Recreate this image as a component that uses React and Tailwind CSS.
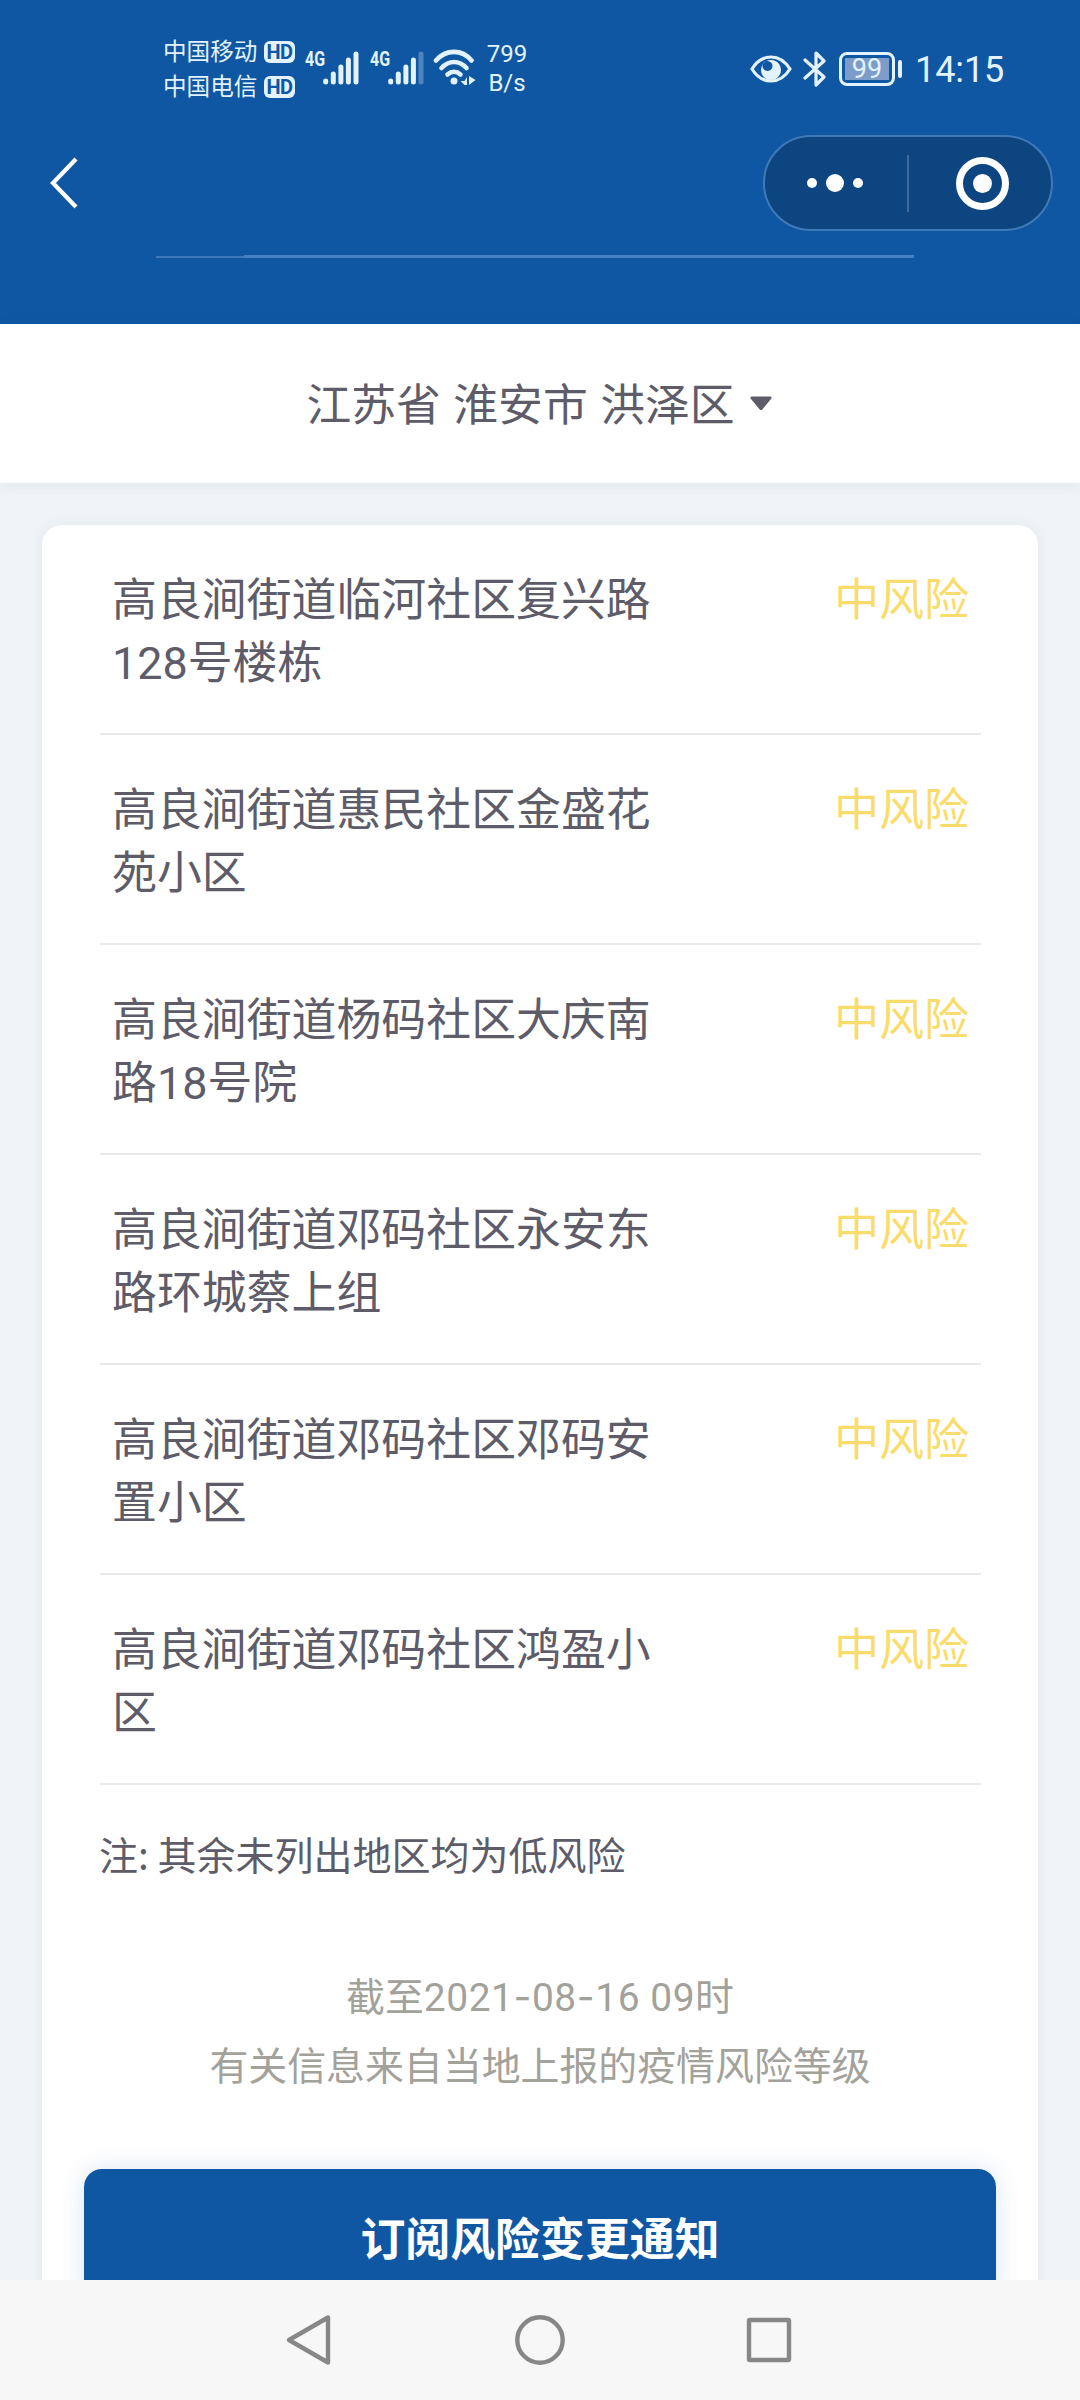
const items = [
  ["高良涧街道临河社区复兴路", "", "128", "号楼栋"],
  ["高良涧街道惠民社区金盛花", "苑小区", "", ""],
  ["高良涧街道杨码社区大庆南", "路", "18", "号院"],
  ["高良涧街道邓码社区永安东", "路环城蔡上组", "", ""],
  ["高良涧街道邓码社区邓码安", "置小区", "", ""],
  ["高良涧街道邓码社区鸿盈小", "区", "", ""],
];

function HdBadge() {
  return (
    <span className="flex h-[22px] w-[31px] items-center justify-center rounded-[6px] bg-[#e2f3ff] font-['Roboto',sans-serif] text-[20px] leading-none font-bold tracking-tight text-[#0f57a3]">
      HD
    </span>
  );
}

function Carrier({ name }) {
  return (
    <div className="flex h-[35px] items-center">
      <span className="w-[101px] pb-[2px] text-[23.600px] leading-[33px] whitespace-nowrap">{name}</span>
      <HdBadge />
    </div>
  );
}

function Signal({ weak }) {
  return (
    <div className="flex h-[36px] w-[55px] items-start">
      <span className="w-[18px] origin-left scale-x-[.8] font-['Roboto',sans-serif] text-[20px] leading-[18px] font-bold">4G</span>
      <svg className="h-[36px] w-[37px]" viewBox="0 0 37 36" fill="none" stroke="#e2f3ff" strokeWidth="5" strokeLinecap="round">
        <path d="M2.7 31v1M10.3 24v8M17.9 17v15M25.4 10v22" />
        <path d="M33 4v28" opacity={weak ? 0.3 : 1} />
      </svg>
    </div>
  );
}

function StatusBar() {
  return (
    <div className="flex h-[134px] items-start pt-[34px] pl-[163px] text-[#e2f3ff]">
      <div className="flex w-[142px] flex-col">
        <Carrier name="中国移动" />
        <Carrier name="中国电信" />
      </div>
      <div className="flex gap-[10px] pt-[16px]">
        <Signal />
        <Signal weak />
      </div>
      <svg className="mt-[14px] ml-[8px] h-[40px] w-[44px]" viewBox="0 0 44 40" fill="none" stroke="#e2f3ff" strokeWidth="4.6" strokeLinecap="round">
        <path d="M3 12.500C13 1 29 1 38.500 12.500" />
        <path d="M8.500 20C16 12 26 12 33.500 20" />
        <path d="M14.500 26.500C18.500 23 23.500 23 27.500 26.500" />
        <circle cx="21" cy="33" r="3.500" fill="#e2f3ff" stroke="none" />
        <path d="M34 29v8h-2.500l-4-4h4zM36 28v9l6.500-5z" fill="#e2f3ff" stroke="none" />
      </svg>
      <div className="mt-[6px] ml-[8px] w-[44px] text-center font-['Roboto',sans-serif] text-[24px] leading-[29px]">
        799
        <br />
        B/s
      </div>
      <div className="ml-[221px] flex h-[70px] items-center">
        <svg className="h-[28px] w-[42px]" viewBox="0 0 42 28">
          <path d="M2 14C12 -2 30 -2 40 14C30 30 12 30 2 14Z" fill="none" stroke="#e2f3ff" strokeWidth="3.200" />
          <path fillRule="evenodd" d="M21 5a10 10 0 1 0 .01 0zM17.500 6a5 5 0 1 1-.01 0z" fill="#e2f3ff" />
        </svg>
        <svg className="ml-[11px] h-[38px] w-[24px]" viewBox="0 0 24 38" fill="none" stroke="#e2f3ff" strokeWidth="3.200" strokeLinejoin="round" strokeLinecap="round">
          <path d="M2 10L21 27L13 35V3L21 11L2 28" />
        </svg>
        <div className="ml-[12px] flex h-[34px] w-[56px] items-center justify-center rounded-[8px] border-3 border-[#e2f3ff] p-[3px]">
          <span className="flex h-full w-full items-center justify-center bg-[#7e9cc9] font-['Roboto',sans-serif] text-[27px] leading-none">99</span>
        </div>
        <span className="ml-[3px] h-[18px] w-[4px] rounded-full bg-[#e2f3ff]" />
        <span className="ml-[13px] pt-[2px] font-['Roboto',sans-serif] text-[36px] leading-none tracking-[-0.100px]">14:15</span>
      </div>
    </div>
  );
}

function TitleBar() {
  return (
    <div className="flex h-[98px] items-start justify-between pr-[27px] pl-[48px]">
      <svg className="mt-[21px] h-[56px] w-[34px]" viewBox="0 0 34 56" fill="none" stroke="#fff" strokeWidth="4.200">
        <path d="M28 4L5 28L28 52" />
      </svg>
      <div className="mt-px flex h-[96px] w-[290px] items-center rounded-full border-2 border-[#3f7ab8] bg-[#0c4580]">
        <div className="flex w-[142px] items-center justify-center gap-[9px] pr-[2px]">
          <span className="size-[10px] rounded-full bg-white" />
          <span className="size-[18px] rounded-full bg-white" />
          <span className="size-[10px] rounded-full bg-white" />
        </div>
        <span className="h-[57px] w-[2px] bg-[#3f6c9c]" />
        <div className="ml-[47px] flex size-[53px] items-center justify-center rounded-full border-[7px] border-white">
          <span className="size-[19px] rounded-full bg-white" />
        </div>
      </div>
    </div>
  );
}

function RiskRow({ item: [firstLine, lead, number, tail] }) {
  return (
    <div className="flex h-[210px] justify-between border-b-2 border-[#e8e9eb] pt-[40px] pr-[12px] pl-[12px] text-[44.900px] leading-[63px]">
      <div className="w-[541px]">
        <div className="h-[63px]">{firstLine}</div>
        <div className="flex h-[63px] items-baseline">
          {lead && <span>{lead}</span>}
          {number && <span className="font-['Roboto',sans-serif] leading-none">{number}</span>}
          {tail && <span>{tail}</span>}
        </div>
      </div>
      <div className="text-[#f9dc6b]">中风险</div>
    </div>
  );
}

export default function App() {
  return (
    <div className="flex h-[2400px] w-[1080px] flex-col overflow-hidden bg-[#eff4f7] font-['Noto_Sans_CJK_SC',sans-serif] text-[#5d5c68]">
      <header className="h-[324px] shrink-0 bg-[#0f57a3]">
        <StatusBar />
        <TitleBar />
        <div className="mt-[23px] ml-[156px] flex w-[758px] items-end">
          <span className="h-[2px] w-[88px] bg-[#3d78bb]" />
          <span className="h-[3px] flex-1 bg-[#4480c2]" />
        </div>
      </header>
      <div className="z-10 flex h-[159px] shrink-0 items-center justify-center gap-[15px] bg-white pr-[2px] shadow-[0_2px_14px_rgba(60,80,100,0.08)]">
        <span className="pb-[3px] text-[44.800px] leading-[60px] [word-spacing:2.500px]">江苏省 淮安市 洪泽区</span>
        <svg className="h-[15px] w-[22px]" viewBox="0 0 22 15" fill="#5d5c68">
          <path d="M1.500 0.500H20.500Q22.500 1 21 3L12.500 13.200Q11 15 9.500 13.200L1 3Q-.5 1 1.500 .5Z" />
        </svg>
      </div>
      <main className="h-[1797px] shrink-0 overflow-hidden px-[42px] pt-[42px]">
        <section className="h-[1900px] rounded-[20px] bg-white pr-[57px] pl-[58px] shadow-[0_0_14px_rgba(60,80,100,0.08)]">
          {items.map((item) => (
            <RiskRow key={item.join("")} item={item} />
          ))}
          <p className="mt-[38px] -ml-px text-[39px] leading-[60px]">注: 其余未列出地区均为低风险</p>
          <div className="mt-[77px] pr-[1px] text-center text-[38.900px] text-[#a2a29b]">
            <p className="h-[69px] leading-[69px]">
              截至
              <span className="font-['Roboto',sans-serif] leading-none tracking-[0.550px]">
                2021<span className="font-['Inter',sans-serif] leading-none">-</span>08<span className="font-['Inter',sans-serif] leading-none">-</span>16 09
              </span>
              时
            </p>
            <p className="h-[69px] leading-[69px]">有关信息来自当地上报的疫情风险等级</p>
          </div>
          <button className="mt-[71px] -ml-[16px] block h-[138px] w-[912px] rounded-[18px] bg-[#0f57a3] pb-[3px] text-[44.900px] font-bold text-white shadow-[0_0_26px_rgba(15,87,163,0.14)]">
            订阅风险变更通知
          </button>
        </section>
      </main>
      <nav className="flex h-[120px] shrink-0 items-center justify-center gap-[178px] bg-[#f7f7f7]">
        <svg className="h-[54px] w-[50px]" viewBox="0 0 50 54" fill="none" stroke="#878787" strokeWidth="4.400" strokeLinejoin="round">
          <path d="M4 27L43 4.500V49.500Z" />
        </svg>
        <svg className="h-[54px] w-[54px]" viewBox="0 0 54 54" fill="none" stroke="#878787" strokeWidth="4.400">
          <circle cx="27" cy="27" r="22.700" />
        </svg>
        <svg className="h-[54px] w-[50px]" viewBox="0 0 50 54" fill="none" stroke="#878787" strokeWidth="4.400" strokeLinejoin="round">
          <rect x="4" y="7" width="40" height="40" rx="1" />
        </svg>
      </nav>
    </div>
  );
}
